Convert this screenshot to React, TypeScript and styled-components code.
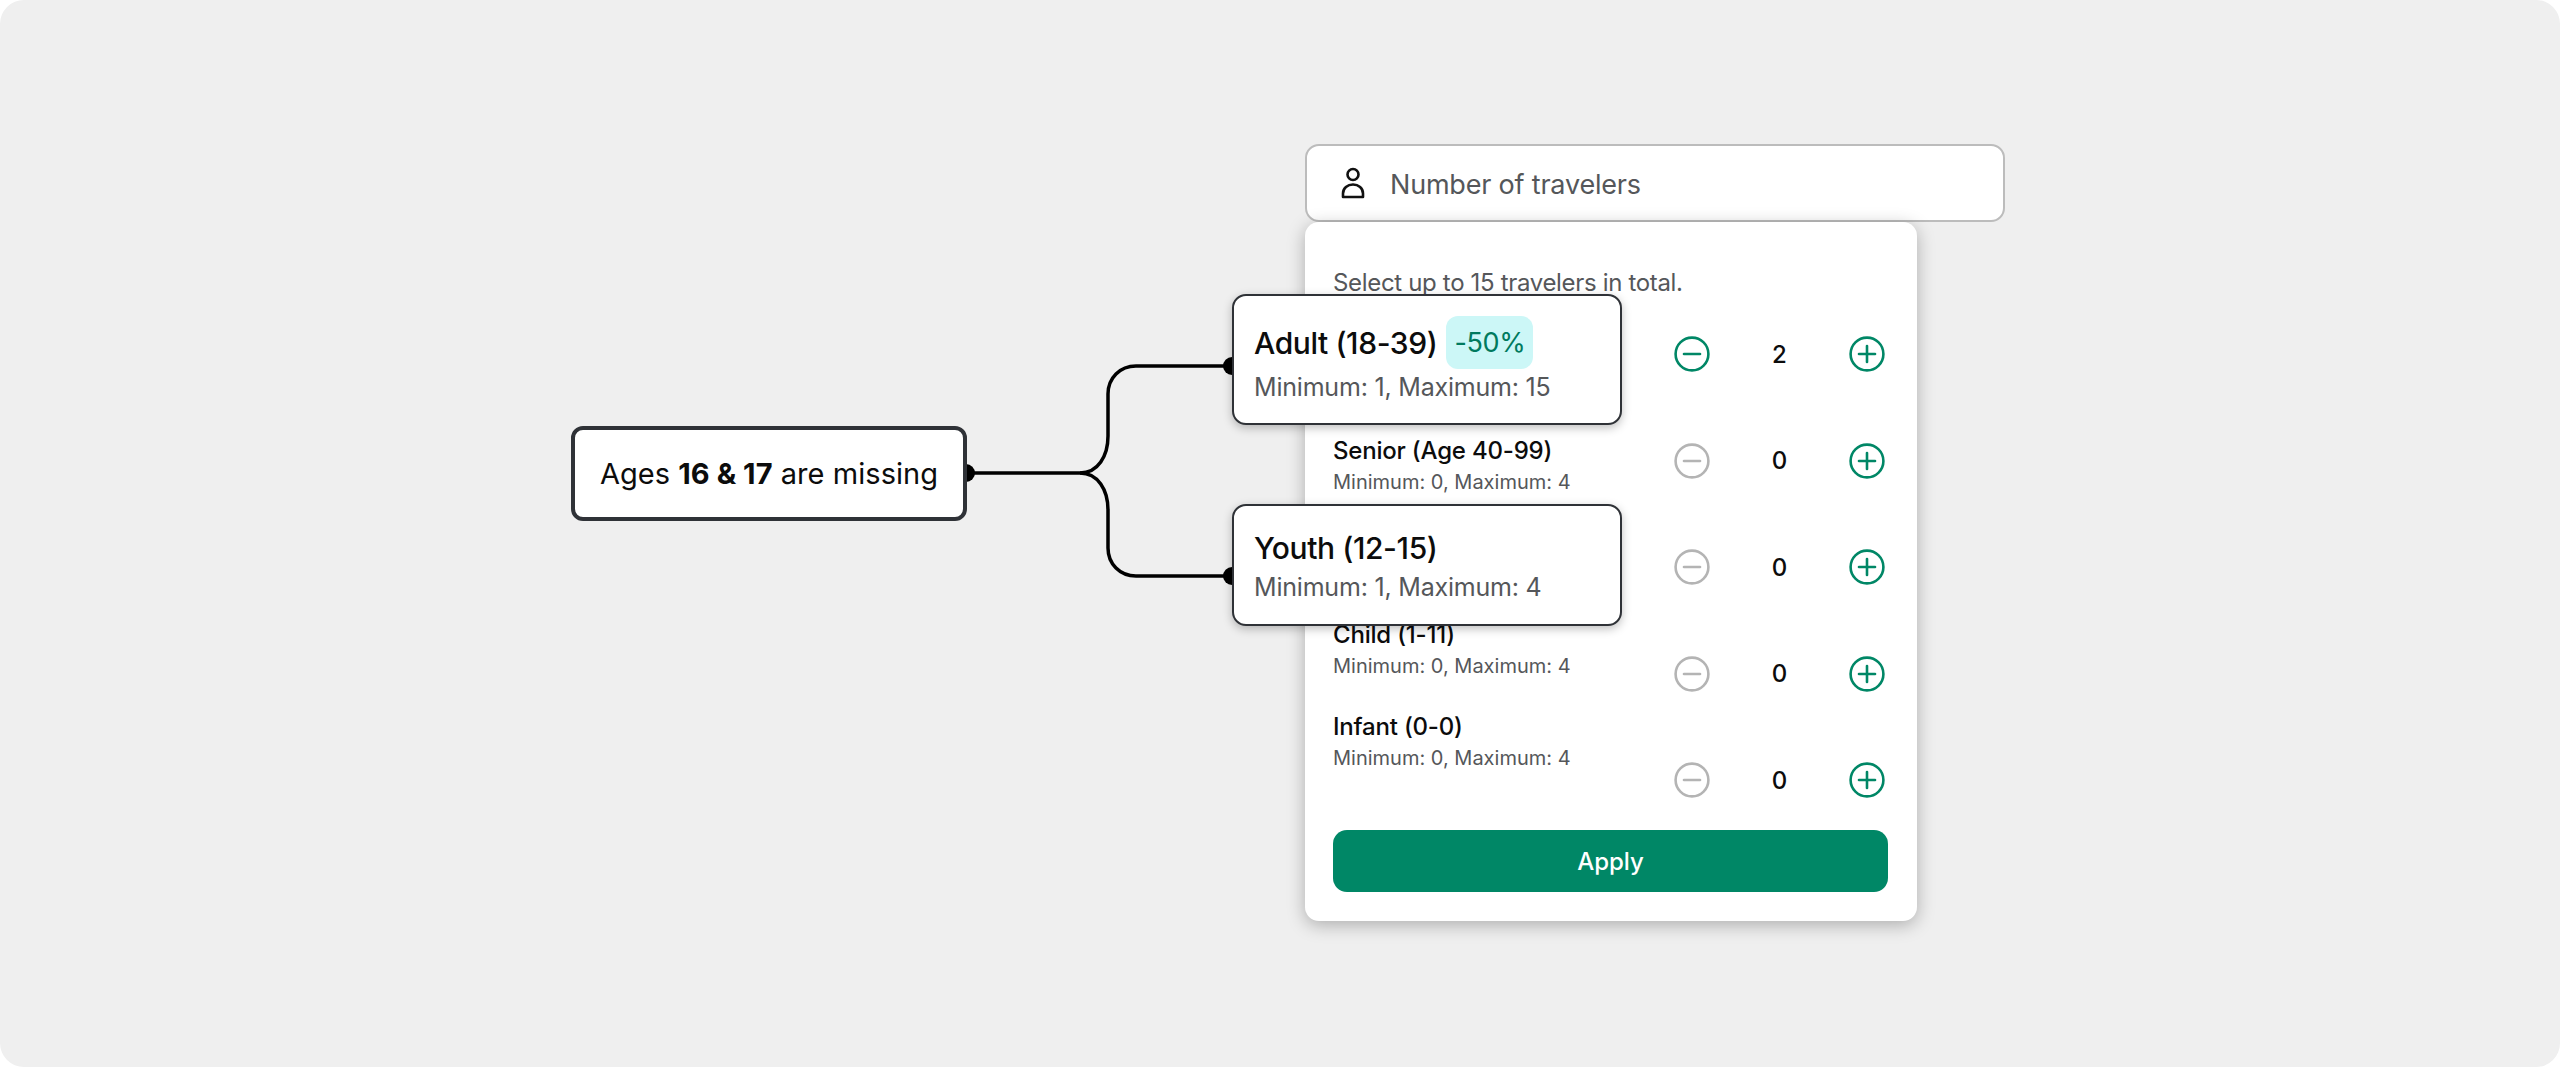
import React from 'react';
import styled, { createGlobalStyle } from 'styled-components';

const colors = {
  canvas: '#efefef',
  ink: '#0c0c0c',
  muted: '#55575a',
  edge: '#2f3237',
  green: '#008766',
  off: '#b4b4b4',
  mint: '#ccf7f7',
};

const GlobalStyle = createGlobalStyle`
  html, body {
    margin: 0;
    padding: 0;
    background: #fff;
  }
  body {
    font-family: Inter, "Liberation Sans", sans-serif;
    color: ${colors.ink};
  }
`;

const Canvas = styled.main`
  position: relative;
  box-sizing: border-box;
  height: 1067px;
  padding: 144px 0 0 1305px;
  background: ${colors.canvas};
  border-radius: 24px;
  overflow: hidden;
`;

const Widget = styled.section`
  width: 700px;
`;

const Field = styled.div`
  box-sizing: border-box;
  display: flex;
  align-items: center;
  gap: 24px;
  height: 78px;
  padding: 0 0 0 33px;
  background: #fff;
  border: 2px solid #bcbcbc;
  border-radius: 14px;
  font-size: 27px;
  letter-spacing: -0.2px;
  color: ${colors.muted};
`;

const FieldLabel = styled.span`
  padding-top: 2px;
`;

const Panel = styled.div`
  box-sizing: border-box;
  width: 612px;
  height: 699px;
  padding: 46px 29px 28px 28px;
  background: #fff;
  border-radius: 14px;
  box-shadow: 0 4px 18px rgba(0, 0, 0, 0.28);
`;

const Intro = styled.p`
  margin: 0 0 38px;
  font-size: 24px;
  line-height: 30px;
  letter-spacing: -0.33px;
  color: ${colors.muted};
`;

const Body = styled.div`
  display: flex;
  justify-content: space-between;
`;

const TextColumn = styled.ul`
  display: flex;
  flex-direction: column;
  gap: 30px;
  margin: 0;
  padding: 8px 0 0;
  list-style: none;
`;

const TextRow = styled.li`
  height: 62px;
`;

const Title = styled.div`
  font-size: 24px;
  font-weight: 500;
  line-height: 30px;
  letter-spacing: -0.2px;
`;

const Limit = styled.div`
  font-size: 20px;
  line-height: 32px;
  color: ${colors.muted};
`;

const ControlColumn = styled.div`
  display: flex;
  flex-direction: column;
  gap: 70.6px;
  padding-right: 3px;
`;

const Stepper = styled.div`
  display: grid;
  grid-template-columns: 36px 1fr 36px;
  align-items: center;
  width: 211px;
  height: 36px;
`;

const Count = styled.span`
  font-size: 24px;
  font-weight: 500;
  text-align: center;
`;

const RoundButton = styled.button<{ $on: boolean }>`
  display: block;
  width: 36px;
  height: 36px;
  margin: 0;
  padding: 0;
  background: none;
  border: 0;
  color: ${props => (props.$on ? colors.green : colors.off)};
  svg {
    display: block;
  }
`;

const Apply = styled.button`
  display: block;
  width: 100%;
  height: 62px;
  margin-top: 32px;
  background: ${colors.green};
  border: 0;
  border-radius: 14px;
  font-family: inherit;
  font-size: 24px;
  font-weight: 500;
  color: #fff;
`;

const Wires = styled.svg`
  position: absolute;
  left: 0;
  top: 0;
`;

const Note = styled.div`
  position: absolute;
  left: 571px;
  top: 426px;
  box-sizing: border-box;
  display: flex;
  align-items: center;
  justify-content: center;
  width: 396px;
  height: 95px;
  background: #fff;
  border: 4px solid ${colors.edge};
  border-radius: 12px;
  font-size: 29px;
  letter-spacing: 0.05px;
  white-space: pre;
  b {
    font-weight: 700;
  }
`;

const Callout = styled.div<{ $top: number; $height: number }>`
  position: absolute;
  left: 1232px;
  top: ${props => props.$top}px;
  box-sizing: border-box;
  display: flex;
  flex-direction: column;
  justify-content: center;
  width: 390px;
  height: ${props => props.$height}px;
  padding: 0 20px;
  background: #fff;
  border: 2px solid ${colors.edge};
  border-radius: 14px;
  box-shadow: 0 3px 10px rgba(0, 0, 0, 0.25);
`;

const CalloutHead = styled.div`
  display: flex;
  align-items: center;
  gap: 9px;
  font-size: 30px;
  font-weight: 500;
  line-height: 42px;
  letter-spacing: -0.4px;
`;

const Badge = styled.span`
  display: flex;
  align-items: center;
  justify-content: center;
  width: 87px;
  height: 53px;
  background: ${colors.mint};
  border-radius: 12px;
  font-size: 27px;
  font-weight: 400;
  color: #007a5e;
`;

const CalloutLimit = styled.div`
  margin-top: 2px;
  font-size: 25px;
  line-height: 32px;
  letter-spacing: -0.2px;
  color: ${colors.muted};
`;

// Adult and Youth rows sit under their callouts, so only the visible text is kept
const travelers = [
  { id: 'adult', count: 2 },
  { id: 'senior', name: 'Senior (Age 40-99)', limit: 'Minimum: 0, Maximum: 4', count: 0 },
  { id: 'youth', count: 0 },
  { id: 'child', name: 'Child (1-11)', limit: 'Minimum: 0, Maximum: 4', count: 0 },
  { id: 'infant', name: 'Infant (0-0)', limit: 'Minimum: 0, Maximum: 4', count: 0 },
];

const PersonIcon = () => (
  <svg width="26" height="32" viewBox="0 0 26 32" fill="none" stroke="#111" strokeWidth="2.6">
    <circle cx="13" cy="7.5" r="5.5" />
    <path d="M3 30v-3.5C3 21 7.5 17.5 13 17.5S23 21 23 26.5V30Z" strokeLinejoin="round" />
  </svg>
);

const StepIcon = ({ plus }: { plus?: boolean }) => (
  <svg width="36" height="36" viewBox="0 0 36 36" fill="none" stroke="currentColor" strokeWidth="2.6" strokeLinecap="round">
    <circle cx="18" cy="18" r="16.4" />
    <path d="M10 18h16" />
    {plus && <path d="M18 10v16" />}
  </svg>
);

const App = () => (
  <>
    <GlobalStyle />
    <Canvas>
      <Widget>
        <Field>
          <PersonIcon />
          <FieldLabel>Number of travelers</FieldLabel>
        </Field>
        <Panel>
          <Intro>Select up to 15 travelers in total.</Intro>
          <Body>
            <TextColumn>
              {travelers.map(t => (
                <TextRow key={t.id}>
                  {t.name && <Title>{t.name}</Title>}
                  {t.limit && <Limit>{t.limit}</Limit>}
                </TextRow>
              ))}
            </TextColumn>
            <ControlColumn>
              {travelers.map(t => (
                <Stepper key={t.id}>
                  <RoundButton $on={t.count > 0}>
                    <StepIcon />
                  </RoundButton>
                  <Count>{t.count}</Count>
                  <RoundButton $on>
                    <StepIcon plus />
                  </RoundButton>
                </Stepper>
              ))}
            </ControlColumn>
          </Body>
          <Apply>Apply</Apply>
        </Panel>
      </Widget>

      <Wires width="2560" height="1067" fill="none">
        <g stroke="#000" strokeWidth="3.5">
          <path d="M966 473H1080C1098 473 1108 456 1108 436V394C1108 378 1120 366 1136 366H1232" />
          <path d="M1080 473C1098 473 1108 490 1108 510V548C1108 564 1120 576 1136 576H1232" />
        </g>
        <circle cx="966" cy="473" r="9" fill="#000" />
        <circle cx="1232" cy="366" r="9" fill="#000" />
        <circle cx="1232" cy="576" r="9" fill="#000" />
      </Wires>

      <Note>
        Ages <b>16 &amp; 17</b> are missing
      </Note>
      <Callout $top={294} $height={131}>
        <CalloutHead>
          Adult (18-39)
          <Badge>-50%</Badge>
        </CalloutHead>
        <CalloutLimit>Minimum: 1, Maximum: 15</CalloutLimit>
      </Callout>
      <Callout $top={504} $height={122}>
        <CalloutHead>Youth (12-15)</CalloutHead>
        <CalloutLimit>Minimum: 1, Maximum: 4</CalloutLimit>
      </Callout>
    </Canvas>
  </>
);

export default App;
